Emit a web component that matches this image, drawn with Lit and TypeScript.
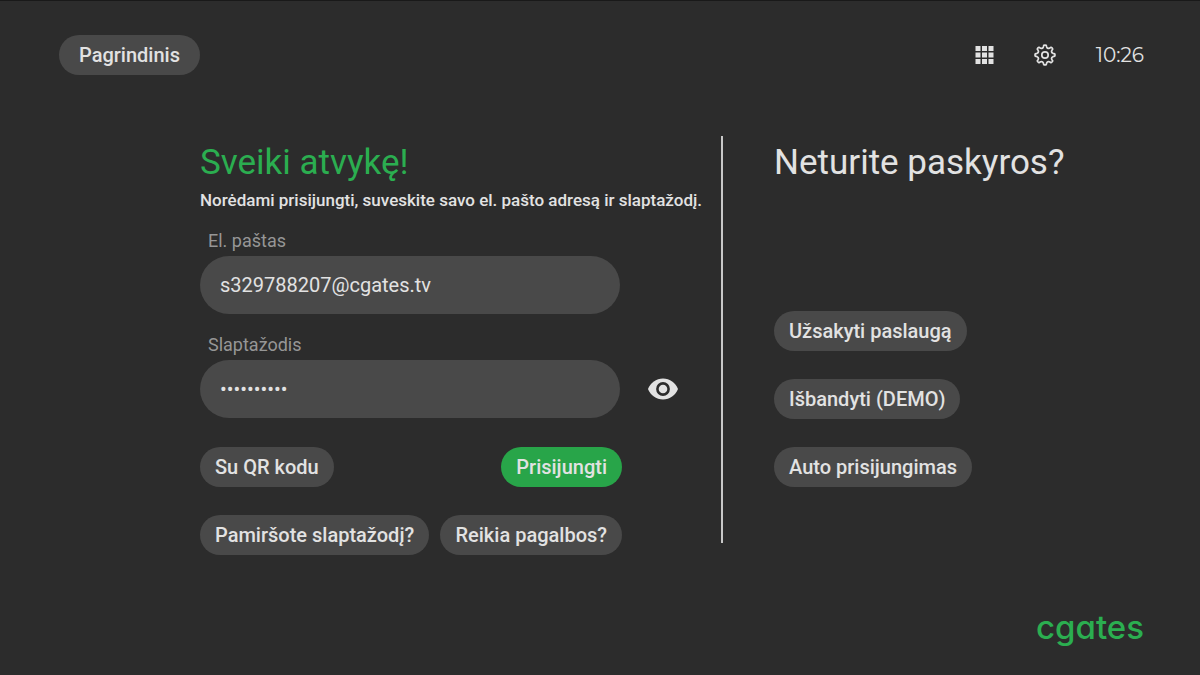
import { LitElement, html, css, svg } from "lit";
import { customElement, state } from "lit/decorators.js";

const TEETH = 8;

/* Outline of a cog with rounded teeth, centred on the origin. */
function cogPath(inner: number, outer: number): string {
  const at = (r: number, deg: number) => {
    const a = (deg * Math.PI) / 180;
    return `${(r * Math.sin(a)).toFixed(2)} ${(-r * Math.cos(a)).toFixed(2)}`;
  };
  const step = 360 / TEETH;
  let d = `M${at(outer, -7)}`;
  for (let i = 0; i < TEETH; i++) {
    const c = i * step;
    d += `Q${at(outer + 0.4, c)} ${at(outer, c + 7)}L${at(inner + 0.8, c + 12)}`;
    d += `Q${at(inner - 0.8, c + step / 2)} ${at(inner + 0.8, c + step - 12)}`;
    d += `L${at(outer, c + step - 7)}`;
  }
  return d + "Z";
}

@customElement("app-root")
export class AppRoot extends LitElement {
  static styles = css`
    :host {
      display: flex;
      flex-direction: column;
      box-sizing: border-box;
      min-height: 100vh;
      padding: 34px 56px 26px 59px;
      border-top: 1px solid #191919;
      background: #2c2c2c;
      color: #e2e2e2;
      font-family: Roboto, "Open Sans", sans-serif;
    }
    * {
      box-sizing: border-box;
    }
    button,
    input {
      border: 0;
      font: inherit;
      color: inherit;
    }
    button {
      padding: 0;
      background: none;
      cursor: pointer;
    }
    svg {
      display: block;
    }
    .bar {
      display: flex;
      align-items: center;
      justify-content: space-between;
    }
    .tools {
      display: flex;
      align-items: center;
      gap: 40px;
    }
    .clock {
      font: 20px/24px Montserrat, Inter, sans-serif;
    }
    .pill {
      height: 40px;
      padding: 0 15px;
      border-radius: 20px;
      background: #494949;
      font-size: 20px;
      font-weight: 500;
      line-height: 40px;
      white-space: nowrap;
    }
    .home {
      padding: 0 20px;
    }
    .primary {
      background: #28a549;
    }
    .content {
      display: flex;
      margin-top: 61px;
      padding-left: 141px;
    }
    .title {
      margin: 0;
      font-size: 35px;
      font-weight: 400;
      line-height: 54px;
      white-space: nowrap;
    }
    .welcome {
      color: #2bae50;
    }
    .lead {
      margin: 0 0 18px;
      font-size: 17px;
      font-weight: 500;
      line-height: 20px;
      white-space: nowrap;
    }
    .login {
      flex: 0 1 521px;
    }
    .label {
      display: block;
      padding-left: 8px;
      color: #969696;
      font-size: 18px;
      line-height: 26px;
    }
    .row {
      display: flex;
      align-items: center;
      gap: 28px;
      margin-top: 2px;
    }
    .row + .label {
      margin-top: 18px;
    }
    .field {
      width: 420px;
      height: 58px;
      padding: 0 20px;
      border-radius: 29px;
      outline: 0;
      background: #494949;
      font-size: 20px;
    }
    .buttons {
      display: grid;
      gap: 28px;
      width: 422px;
      margin-top: 29px;
    }
    .actions {
      display: flex;
      justify-content: space-between;
    }
    .divider {
      width: 2px;
      margin-bottom: 12px;
      background: #c8c8c8;
    }
    .signup {
      display: flex;
      flex-direction: column;
      align-items: flex-start;
      gap: 28px;
      padding: 0 0 68px 51px;
    }
    .signup .title {
      flex: 1;
    }
    .brand {
      margin-top: auto;
      align-self: flex-end;
      color: #2bae50;
      font: 500 33px/44px Inter, sans-serif;
      font-feature-settings: "cv11";
    }
  `;

  @state() private revealed = false;

  render() {
    return html`
      <header class="bar">
        <button class="pill home">Pagrindinis</button>
        <div class="tools">
          <button aria-label="Programos">
            <svg width="20" height="20" viewBox="0 0 20 20" fill="#e2e2e2">
              ${[1, 7.5, 14].map((y) => [1.5, 8, 14.5].map((x) => svg`<rect x=${x} y=${y} width="5" height="5" />`))}
            </svg>
          </button>
          <button aria-label="Nustatymai">
            <svg width="22" height="22" viewBox="-11 -11 22 22" fill="none" stroke="#e2e2e2" stroke-width="1.7" stroke-linejoin="round">
              <path d=${cogPath(7.3, 9.8)} />
              <circle r="3.2" />
            </svg>
          </button>
          <time class="clock">10:26</time>
        </div>
      </header>
      <main class="content">
        <form class="login" @submit=${(e: Event) => e.preventDefault()}>
          <h1 class="title welcome">Sveiki atvykę!</h1>
          <p class="lead">Norėdami prisijungti, suveskite savo el. pašto adresą ir slaptažodį.</p>
          <label class="label" for="email">El. paštas</label>
          <div class="row">
            <input class="field" id="email" type="text" value="s329788207@cgates.tv" />
          </div>
          <label class="label" for="password">Slaptažodis</label>
          <div class="row">
            <input class="field" id="password" type=${this.revealed ? "text" : "password"} value="slaptas123" />
            <button type="button" aria-label="Rodyti slaptažodį" @click=${() => (this.revealed = !this.revealed)}>
              <svg width="30" height="22" viewBox="0 0 30 22">
                <path fill="#e2e2e2" d="M15 .5C8.200.5 2.400 4.800 0 11c2.400 6.200 8.200 10.500 15 10.500S27.600 17.200 30 11C27.600 4.800 21.800.5 15 .5Z" />
                <circle cx="15" cy="11" r="5.600" fill="none" stroke="#2c2c2c" stroke-width="2.600" />
              </svg>
            </button>
          </div>
          <div class="buttons">
            <div class="actions">
              <button class="pill" type="button">Su QR kodu</button>
              <button class="pill primary" type="submit">Prisijungti</button>
            </div>
            <div class="actions">
              <button class="pill" type="button">Pamiršote slaptažodį?</button>
              <button class="pill" type="button">Reikia pagalbos?</button>
            </div>
          </div>
        </form>
        <div class="divider"></div>
        <section class="signup">
          <h2 class="title">Neturite paskyros?</h2>
          <button class="pill">Užsakyti paslaugą</button>
          <button class="pill">Išbandyti (DEMO)</button>
          <button class="pill">Auto prisijungimas</button>
        </section>
      </main>
      <footer class="brand">cgates</footer>
    `;
  }
}
